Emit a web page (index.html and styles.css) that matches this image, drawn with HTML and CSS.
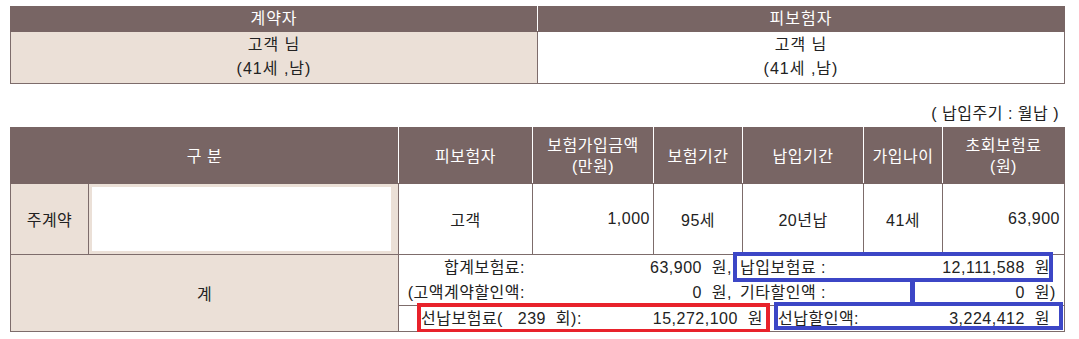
FILE: index.html
```html
<!DOCTYPE html>
<html lang="ko">
<head>
<meta charset="utf-8">
<title>보험료 안내</title>
<link rel="stylesheet" href="styles.css">
</head>
<body>
<div class="page">
  <table class="parties">
    <colgroup><col class="c-left"><col class="c-right"></colgroup>
    <thead>
      <tr><th>계약자</th><th>피보험자</th></tr>
    </thead>
    <tbody>
      <tr>
        <td class="beige">고객 님<br>(41세 ,남)</td>
        <td>고객 님<br>(41세 ,남)</td>
      </tr>
    </tbody>
  </table>

  <div class="cycle">( 납입주기 : 월납 )</div>

  <table class="plan">
    <colgroup>
      <col class="w1"><col class="w2"><col class="w3"><col class="w4">
      <col class="w5"><col class="w6"><col class="w7"><col class="w8">
    </colgroup>
    <thead>
      <tr>
        <th colspan="2">구 분</th>
        <th>피보험자</th>
        <th>보험가입금액<br>(만원)</th>
        <th>보험기간</th>
        <th>납입기간</th>
        <th>가입나이</th>
        <th>초회보험료<br>(원)</th>
      </tr>
    </thead>
    <tbody>
      <tr class="main">
        <td class="beige">주계약</td>
        <td class="beige name"><div class="namebox"></div></td>
        <td>고객</td>
        <td class="num">1,000</td>
        <td>95세</td>
        <td>20년납</td>
        <td>41세</td>
        <td class="num num-last">63,900</td>
      </tr>
      <tr class="total">
        <td colspan="2" class="beige">계</td>
        <td colspan="6" class="sumcell">
          <div class="sum">
            <div class="row">
              <span class="lab">합계보험료:</span>
              <span class="val">63,900  원,</span>
              <span class="lab2">납입보험료 :</span>
              <span class="val2">12,111,588  원</span>
              <span class="end"></span>
            </div>
            <div class="row">
              <span class="lab">(고액계약할인액:</span>
              <span class="val">0  원,</span>
              <span class="lab2">기타할인액 :</span>
              <span class="val2">0  원</span>
              <span class="end">)</span>
            </div>
            <div class="line3">
              <div class="part1"><span>선납보험료(   239  회):</span><span>15,272,100  원</span></div>
              <div class="part2"><span>선납할인액:</span><span>3,224,412  원</span></div>
            </div>
            <div class="mark red-box"></div>
            <div class="mark blue-box1"></div>
            <div class="mark blue-link"></div>
            <div class="mark blue-box2"></div>
          </div>
        </td>
      </tr>
    </tbody>
  </table>
</div>
</body>
</html>
```

FILE: styles.css
```css
html, body {
  margin: 0;
  background: #fff;
}

body {
  font-family: "Liberation Sans", "Noto Sans CJK KR", sans-serif;
  font-size: 16px;
  color: #222;
  letter-spacing: 0.5px;
}

.page {
  padding: 6px 15px 0 10px;
  width: 1054px;
}

table {
  border-collapse: collapse;
  table-layout: fixed;
  width: 1054px;
}

th {
  background: #786564;
  color: #fff;
  font-weight: normal;
  border: 1px solid #786564;
  border-left-color: #fff;
  border-right-color: #fff;
  text-align: center;
}

th:first-child { border-left-color: #786564; }
th:last-child { border-right-color: #786564; }

td {
  border: 1px solid #7d6c6b;
  text-align: center;
  padding: 0;
}

.beige { background: #ebe0d7; }

/* parties table */
.parties { letter-spacing: 1px; }
.c-left { width: 527px; }
.c-right { width: 527px; }

.parties th {
  height: 24px;
  line-height: 24px;
  padding: 0;
}

.parties td {
  line-height: 24px;
  padding: 1px 0 2px;
}

.cycle {
  margin: 20px 0 3px;
  line-height: 20px;
  text-align: right;
  padding-right: 5px;
}

/* plan table */
.w1 { width: 78px; }
.w2 { width: 310px; }
.w3 { width: 134px; }
.w4 { width: 121px; }
.w5 { width: 89px; }
.w6 { width: 121px; }
.w7 { width: 79px; }
.w8 { width: 122px; }

.plan th {
  line-height: 21px;
  padding: 7px 0 6px;
}

.plan .main td {
  height: 70px;
}

.plan td.num { text-align: right; padding-right: 3px; }
.plan td.num-last { padding-right: 4px; }

.plan td.name { text-align: left; }

.namebox {
  width: 299px;
  height: 64px;
  margin: 3px 0 3px 3px;
  background: #fff;
}

.sumcell {
  padding: 0;
  vertical-align: top;
}

.sum {
  position: relative;
  text-align: left;
}

.sum .row {
  display: grid;
  grid-template-columns: 133px 208px auto 1fr 14px;
  height: 25px;
  line-height: 25px;
  white-space: pre;
}

.sum .lab { text-align: right; padding-right: 7px; }
.sum .val { text-align: right; padding-right: 8px; }
.sum .lab2 { text-align: left; }
.sum .val2 { text-align: right; }
.sum .end { text-align: left; }

.sum .line3 {
  display: flex;
  border-top: 1px solid #7d6c6b;
  height: 25px;
  line-height: 25px;
  white-space: pre;
}

.part1 {
  width: 371px;
  box-sizing: border-box;
  padding: 0 7px 0 22px;
  display: flex;
  justify-content: space-between;
}

.part2 {
  flex: 1;
  padding: 0 14px 0 8px;
  display: flex;
  justify-content: space-between;
}

.mark {
  position: absolute;
  box-sizing: border-box;
}

.red-box {
  left: 18px;
  top: 48px;
  width: 353px;
  height: 30px;
  border: 4px solid #e8222b;
}

.blue-box1 {
  left: 334px;
  top: -3px;
  width: 320px;
  height: 30px;
  border: 4px solid #3c46c6;
}

.blue-link {
  left: 511px;
  top: 26px;
  width: 5px;
  height: 23px;
  background: #3c46c6;
}

.blue-box2 {
  left: 375px;
  top: 47px;
  width: 289px;
  height: 28px;
  border: 4px solid #3c46c6;
}
```
